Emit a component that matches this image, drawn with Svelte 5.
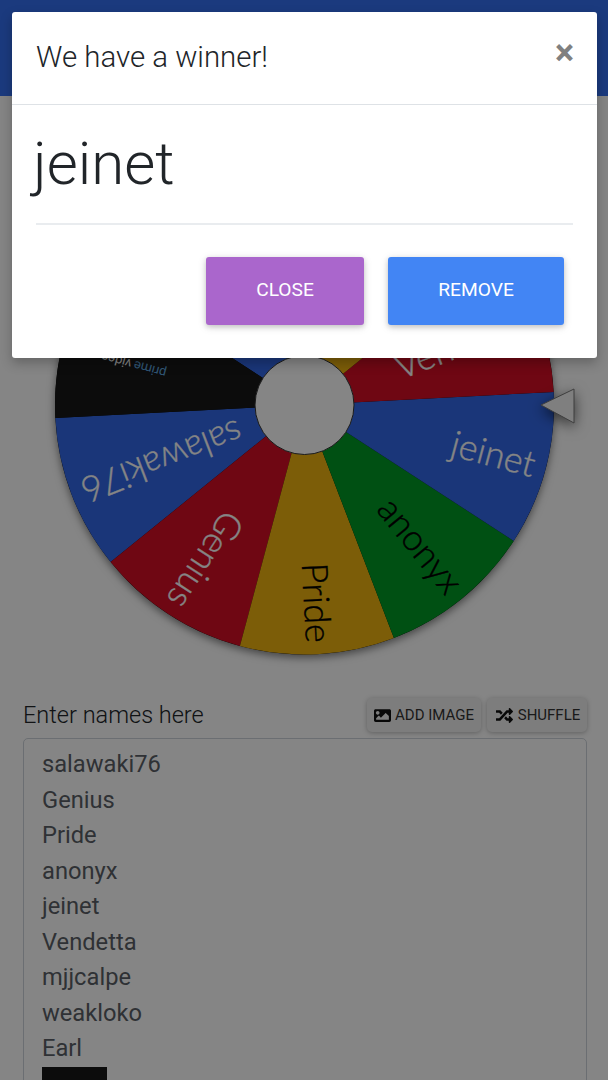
<script>
  const names = ['salawaki76', 'Genius', 'Pride', 'anonyx', 'jeinet', 'Vendetta', 'mjjcalpe', 'weakloko', 'Earl'];
  const palette = ['#3369e8', '#d50f25', '#eeb211', '#009925'];
  const cx = 304.5;
  const cy = 270;
  const radius = 249.5;
  const step = 36;
  const start = 141;

  const point = (deg, r) => {
    const a = (deg * Math.PI) / 180;
    return `${(cx + r * Math.cos(a)).toFixed(2)} ${(cy + r * Math.sin(a)).toFixed(2)}`;
  };
  const wedge = (from, to) =>
    `M${cx} ${cy}L${point(from, radius)}A${radius} ${radius} 0 0 1 ${point(to, radius)}Z`;

  // Slices run anticlockwise from the first name; the tenth slice holds a picture entry.
  const slices = names.map((name, i) => {
    const from = start - i * step;
    const color = palette[i % 4];
    return {
      name,
      color,
      path: wedge(from, from + step),
      angle: from + step / 2,
      ink: color === '#eeb211' || color === '#009925' ? '#000' : '#fff'
    };
  });
</script>

<div class="page">
  <header class="topbar"></header>

  <main>
    <svg class="wheel" viewBox="0 0 608 540" role="img" aria-label="Wheel of names">
      <circle class="rim" cx={cx} cy={cy} r={radius} />
      {#each slices as s}
        <path d={s.path} fill={s.color} />
      {/each}
      <path d={wedge(177, 213)} fill="#181818" />
      {#each slices as s}
        <text
          class="label"
          x={cx + 238}
          y={cy + 11}
          text-anchor="end"
          fill={s.ink}
          stroke={s.ink}
          transform="rotate({s.angle} {cx} {cy})">{s.name}</text>
      {/each}
      <g transform="rotate(195 {cx} {cy})">
        <text class="brand" x={cx + 142} y={cy - 1} fill="#5fa8e0">prime</text>
        <text class="brand" x={cx + 178} y={cy - 1} fill="#fff">video</text>
      </g>
      <circle class="hub" cx={cx} cy={cy} r="49.5" />
      <polygon class="pointer" points="541,270 574,254 574,288" />
    </svg>

    <section class="names">
      <div class="names-head">
        <span class="names-title">Enter names here</span>
        <div class="tools">
          <button class="tool add">
            <svg viewBox="0 0 512 512" aria-hidden="true"><path d="M464 448H48c-26.51 0-48-21.49-48-48V112c0-26.51 21.49-48 48-48h416c26.51 0 48 21.49 48 48v288c0 26.51-21.49 48-48 48zM112 120c-30.928 0-56 25.072-56 56s25.072 56 56 56 56-25.072 56-56-25.072-56-56-56zM64 384h384V272l-87.515-87.515c-4.686-4.686-12.284-4.686-16.971 0L208 320l-55.515-55.515c-4.686-4.686-12.284-4.686-16.971 0L64 336v48z" /></svg>
            ADD IMAGE
          </button>
          <button class="tool shuffle">
            <svg viewBox="0 0 512 512" aria-hidden="true"><path d="M504.971 359.029c9.373 9.373 9.373 24.569 0 33.941l-80 79.984c-15.01 15.01-40.971 4.49-40.971-16.971V416h-58.785a12.004 12.004 0 0 1-8.773-3.812l-70.556-75.596 53.333-57.143L352 336h32v-39.981c0-21.438 25.943-31.998 40.971-16.971l80 79.981zM12 176h84l52.781 56.551 53.333-57.143-70.556-75.596A11.999 11.999 0 0 0 122.785 96H12c-6.627 0-12 5.373-12 12v56c0 6.627 5.373 12 12 12zm372 0v39.984c0 21.46 25.961 31.98 40.971 16.971l80-79.984c9.373-9.373 9.373-24.569 0-33.941l-80-79.981C409.943 24.021 384 34.582 384 56.019V96h-58.785a12.004 12.004 0 0 0-8.773 3.812L96 336H12c-6.627 0-12 5.373-12 12v56c0 6.627 5.373 12 12 12h110.785c3.326 0 6.503-1.381 8.773-3.812L352 176h32z" /></svg>
            SHUFFLE
          </button>
        </div>
      </div>
      <div class="entries">
        {#each names as name}
          <div class="entry">{name}</div>
        {/each}
        <div class="picture-entry"></div>
      </div>
    </section>
  </main>

  <div class="backdrop"></div>

  <div class="dialog" role="dialog" aria-label="Winner">
    <div class="dialog-head">
      <h2>We have a winner!</h2>
      <button class="dismiss" aria-label="Dismiss">×</button>
    </div>
    <div class="dialog-body">
      <div class="winner">jeinet</div>
      <hr />
      <div class="actions">
        <button class="action purple">CLOSE</button>
        <button class="action blue">REMOVE</button>
      </div>
    </div>
  </div>
</div>

<style>
  :global(body) {
    margin: 0;
    background: #fff;
  }

  .page {
    position: relative;
    width: 608px;
    height: 1080px;
    overflow: hidden;
    font-family: Roboto, "Liberation Sans", sans-serif;
    color: #212529;
  }

  .topbar {
    height: 96px;
    background: #3470f2;
  }

  main {
    display: flow-root;
  }

  .wheel {
    display: block;
    width: 608px;
    height: 540px;
    margin-top: 39px;
  }

  .rim {
    fill: #000;
    filter: drop-shadow(0 3px 4px rgba(0, 0, 0, 0.5));
  }

  .label {
    font-family: Lato, Roboto, sans-serif;
    font-weight: 300;
    font-size: 36px;
    stroke-width: 0.35px;
  }

  .brand {
    font-family: Roboto, sans-serif;
    font-weight: 400;
    font-size: 13px;
  }

  .hub {
    fill: #fff;
    stroke: #333;
    stroke-width: 1;
  }

  .pointer {
    fill: #f4f4f4;
    stroke: #777;
    stroke-width: 1;
    filter: drop-shadow(0 4px 7px rgba(0, 0, 0, 0.6));
  }

  .names {
    margin: 23px 21px 0 23px;
  }

  .names-head {
    display: flex;
    justify-content: space-between;
    align-items: flex-end;
  }

  .names-title {
    font-weight: 300;
    font-size: 23.5px;
    line-height: 34px;
  }

  .tools {
    display: flex;
    gap: 6px;
  }

  .tool {
    display: flex;
    align-items: center;
    justify-content: center;
    gap: 4px;
    height: 34px;
    padding: 0;
    border: 0;
    border-radius: 5px;
    background: #f0f0f0;
    color: #333;
    font: 400 15px Roboto, sans-serif;
    box-shadow: 0 1px 5px rgba(0, 0, 0, 0.28);
  }

  .add {
    width: 114px;
  }

  .shuffle {
    width: 100px;
    gap: 5px;
    padding-left: 2px;
  }

  .tool svg {
    width: 17px;
    height: 17px;
    fill: #111;
  }

  .entries {
    margin-top: 6px;
    height: 400px;
    box-sizing: border-box;
    padding: 8px 18px;
    border: 1px solid #ced4da;
    border-radius: 5px;
    font-size: 23.7px;
    line-height: 35.5px;
    color: #5a5f66;
  }

  .picture-entry {
    width: 65px;
    height: 40px;
    background: #181818;
  }

  .backdrop {
    position: absolute;
    inset: 0;
    background: rgba(0, 0, 0, 0.48);
  }

  .dialog {
    position: absolute;
    left: 12px;
    top: 12px;
    width: 585px;
    height: 346px;
    background: #fff;
    border-radius: 3px;
    box-shadow: 0 5px 12px rgba(0, 0, 0, 0.25);
    display: flex;
    flex-direction: column;
  }

  .dialog-head {
    box-sizing: border-box;
    height: 93px;
    flex: none;
    display: flex;
    justify-content: space-between;
    align-items: center;
    padding: 0 23px 0 24px;
    border-bottom: 1px solid #dee2e6;
  }

  h2 {
    margin: 0 0 2px;
    font-weight: 300;
    font-size: 29.4px;
    color: #212529;
  }

  .dismiss {
    border: 0;
    padding: 0;
    background: none;
    font: 700 36px/1 Roboto, sans-serif;
    color: #808080;
    margin-top: -10px;
  }

  .dialog-body {
    padding: 0 24px;
  }

  .winner {
    font-weight: 300;
    font-size: 60px;
    line-height: 118px;
    margin-left: -3px;
    color: #212529;
  }

  hr {
    margin: 0;
    border: 0;
    border-top: 2px solid #e9ecef;
  }

  .actions {
    display: flex;
    justify-content: flex-end;
    gap: 24px;
    margin-top: 32px;
    padding-right: 9px;
  }

  .action {
    height: 68px;
    border: 0;
    border-radius: 3px;
    padding: 0 0 3px;
    color: #fff;
    font: 400 19.2px Roboto, sans-serif;
    box-shadow: 0 2px 5px rgba(0, 0, 0, 0.16), 0 2px 10px rgba(0, 0, 0, 0.12);
  }

  .purple {
    width: 158px;
    background: #aa66cc;
  }

  .blue {
    width: 176px;
    background: #4285f4;
  }
</style>
